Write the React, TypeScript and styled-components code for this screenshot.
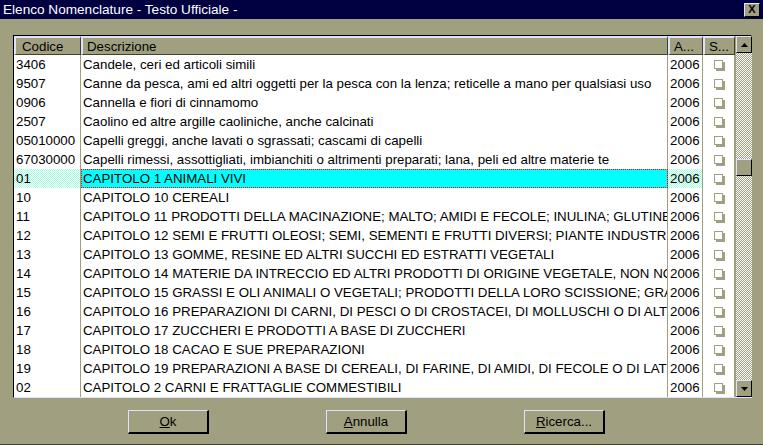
import React from "react";
import styled, { createGlobalStyle } from "styled-components";

const OLIVE = "#a0a080";
const LAV = "#e0e0ff";
const DARK = "#404030";

const Global = createGlobalStyle`
  html, body { margin: 0; padding: 0; background: ${OLIVE}; }
  body { font-family: "Liberation Sans", Arial, sans-serif; font-size: 13.3px; color: #000; }
`;

const Window = styled.div`
  width: 763px;
  height: 445px;
  box-sizing: border-box;
  background: ${OLIVE};
  display: flex;
  flex-direction: column;
  border-bottom: 1px solid ${DARK};
  overflow: hidden;
`;

const TitleBar = styled.div`
  height: 19px;
  background: #000040;
  color: #fff;
  display: flex;
  align-items: center;
  justify-content: space-between;
  padding: 0 3px 0 3px;
  font-size: 13.6px;
`;

const CloseBtn = styled.div`
  width: 14px;
  height: 12px;
  background: ${OLIVE};
  border-top: 1px solid ${LAV};
  border-left: 1px solid ${LAV};
  border-right: 1px solid #000;
  border-bottom: 1px solid #000;
  display: flex;
  align-items: center;
  justify-content: center;
  color: #000;
  font-weight: bold;
  font-size: 11px;
  line-height: 1;
`;

const Body = styled.div`
  flex: 1;
  display: flex;
  flex-direction: column;
  padding: 16px 11px 0 13px;
`;

const GridFrame = styled.div`
  height: 363px;
  display: flex;
  border-top: 1px solid #000;
  border-left: 1px solid #000;
  border-right: 1px solid ${LAV};
  border-bottom: 1px solid ${LAV};
  background: #fff;
  box-sizing: border-box;
`;

const Table = styled.div`
  width: 721px;
  display: flex;
  flex-direction: column;
`;

const cols = "67px 587px 35px 32px";

const HeaderRow = styled.div`
  display: grid;
  grid-template-columns: ${cols};
  height: 19px;
  background: ${OLIVE};
`;

const HeaderCell = styled.div`
  box-sizing: border-box;
  border-top: 2px solid ${LAV};
  border-left: 2px solid ${LAV};
  border-right: 1px solid ${DARK};
  border-bottom: 1px solid ${DARK};
  padding-left: ${(p: { $pad?: number }) => p.$pad ?? 6}px;
  display: flex;
  align-items: center;
  white-space: nowrap;
  overflow: hidden;
`;

const Row = styled.div`
  display: grid;
  grid-template-columns: ${cols};
  height: 19px;
`;

type CellProps = { $variant?: "dither" | "cyan" | "plain"; $center?: boolean };

const Cell = styled.div<CellProps>`
  box-sizing: border-box;
  border-right: 1px solid ${OLIVE};
  padding-left: 2px;
  display: flex;
  align-items: center;
  justify-content: ${(p) => (p.$center ? "center" : "flex-start")};
  white-space: nowrap;
  overflow: hidden;
  background: ${(p) =>
    p.$variant === "cyan"
      ? "#00ffff"
      : p.$variant === "dither"
      ? "repeating-conic-gradient(#a0ffe0 0 25%, #ffffff 0 50%) 0 0 / 2px 2px"
      : "#fff"};
  ${(p) => (p.$variant === "cyan" ? "outline: 1px dotted #ff0000; outline-offset: -1px;" : "")}
`;

const Check = styled.div`
  width: 9px;
  height: 9px;
  box-sizing: border-box;
  background: #fff;
  border: 1px solid ${OLIVE};
  box-shadow: 2px 2px 0 #a0a080;
  margin-right: 2px;
`;

const Scrollbar = styled.div`
  width: 17px;
  display: flex;
  flex-direction: column;
  border-left: 1px solid ${OLIVE};
  background: repeating-conic-gradient(${OLIVE} 0 25%, #ffffff 0 50%) 0 0 / 2px 2px;
`;

const ScrollBtn = styled.div`
  width: 16px;
  height: 17px;
  box-sizing: border-box;
  background: ${OLIVE};
  border-top: 1px solid ${LAV};
  border-left: 1px solid ${LAV};
  border-right: 1px solid #000;
  border-bottom: 1px solid #000;
  display: flex;
  align-items: center;
  justify-content: center;
`;

const Track = styled.div`
  flex: 1;
  display: flex;
  flex-direction: column;
`;

const Spacer = styled.div<{ $h: number }>`
  height: ${(p) => p.$h}px;
`;

const Thumb = styled(ScrollBtn)``;

const ButtonRow = styled.div`
  display: flex;
  padding: 12px 0 0 115px;
  gap: 117px;
`;

const Button = styled.div`
  width: 81px;
  height: 24px;
  box-sizing: border-box;
  background: ${OLIVE};
  border-top: 1px solid ${LAV};
  border-left: 1px solid ${LAV};
  border-right: 2px solid #000;
  border-bottom: 2px solid #000;
  display: flex;
  align-items: center;
  justify-content: center;
`;

const U = styled.span`
  text-decoration: underline;
`;

const rows: [string, string][] = [
  ["3406", "Candele, ceri ed articoli simili"],
  ["9507", "Canne da pesca, ami ed altri oggetti per la pesca con la lenza; reticelle a mano per qualsiasi uso"],
  ["0906", "Cannella e fiori di cinnamomo"],
  ["2507", "Caolino ed altre argille caoliniche, anche calcinati"],
  ["05010000", "Capelli greggi, anche lavati o sgrassati; cascami di capelli"],
  ["67030000", "Capelli rimessi, assottigliati, imbianchiti o altrimenti preparati; lana, peli ed altre materie te"],
  ["01", "CAPITOLO 1 ANIMALI VIVI"],
  ["10", "CAPITOLO 10 CEREALI"],
  ["11", "CAPITOLO 11 PRODOTTI DELLA MACINAZIONE; MALTO; AMIDI E FECOLE; INULINA; GLUTINE DI FRUMENTO"],
  ["12", "CAPITOLO 12 SEMI E FRUTTI OLEOSI; SEMI, SEMENTI E FRUTTI DIVERSI; PIANTE INDUSTRIALI O MEDICINALI"],
  ["13", "CAPITOLO 13 GOMME, RESINE ED ALTRI SUCCHI ED ESTRATTI VEGETALI"],
  ["14", "CAPITOLO 14 MATERIE DA INTRECCIO ED ALTRI PRODOTTI DI ORIGINE VEGETALE, NON NOMINATI"],
  ["15", "CAPITOLO 15 GRASSI E OLI ANIMALI O VEGETALI; PRODOTTI DELLA LORO SCISSIONE; GRASSI"],
  ["16", "CAPITOLO 16 PREPARAZIONI DI CARNI, DI PESCI O DI CROSTACEI, DI MOLLUSCHI O DI ALTRI"],
  ["17", "CAPITOLO 17 ZUCCHERI E PRODOTTI A BASE DI ZUCCHERI"],
  ["18", "CAPITOLO 18 CACAO E SUE PREPARAZIONI"],
  ["19", "CAPITOLO 19 PREPARAZIONI A BASE DI CEREALI, DI FARINE, DI AMIDI, DI FECOLE O DI LATTE"],
  ["02", "CAPITOLO 2 CARNI E FRATTAGLIE COMMESTIBILI"],
];

const Arrow = ({ up }: { up?: boolean }) => (
  <svg width="7" height="4" viewBox="0 0 7 4">
    <path d={up ? "M3.5 0 L7 4 L0 4 Z" : "M0 0 L7 0 L3.5 4 Z"} fill="#000" />
  </svg>
);

export default function App() {
  return (
    <>
      <Global />
      <Window>
        <TitleBar>
          <span>Elenco Nomenclature - Testo Ufficiale -</span>
          <CloseBtn>X</CloseBtn>
        </TitleBar>
        <Body>
          <GridFrame>
            <Table>
              <HeaderRow>
                <HeaderCell>Codice</HeaderCell>
                <HeaderCell $pad={4}>Descrizione</HeaderCell>
                <HeaderCell $pad={4}>A...</HeaderCell>
                <HeaderCell $pad={4}>S...</HeaderCell>
              </HeaderRow>
              {rows.map(([code, desc], i) => {
                const sel = i === 6;
                return (
                  <Row key={i}>
                    <Cell $variant={sel ? "dither" : "plain"}>{code}</Cell>
                    <Cell $variant={sel ? "cyan" : "plain"}>{desc}</Cell>
                    <Cell $variant={sel ? "dither" : "plain"}>2006</Cell>
                    <Cell $center>
                      <Check />
                    </Cell>
                  </Row>
                );
              })}
            </Table>
            <Scrollbar>
              <ScrollBtn>
                <Arrow up />
              </ScrollBtn>
              <Track>
                <Spacer $h={106} />
                <Thumb />
              </Track>
              <ScrollBtn>
                <Arrow />
              </ScrollBtn>
            </Scrollbar>
          </GridFrame>
          <ButtonRow>
            <Button>
              <span>
                <U>O</U>k
              </span>
            </Button>
            <Button>
              <span>
                <U>A</U>nnulla
              </span>
            </Button>
            <Button>
              <span>
                <U>R</U>icerca...
              </span>
            </Button>
          </ButtonRow>
        </Body>
      </Window>
    </>
  );
}
